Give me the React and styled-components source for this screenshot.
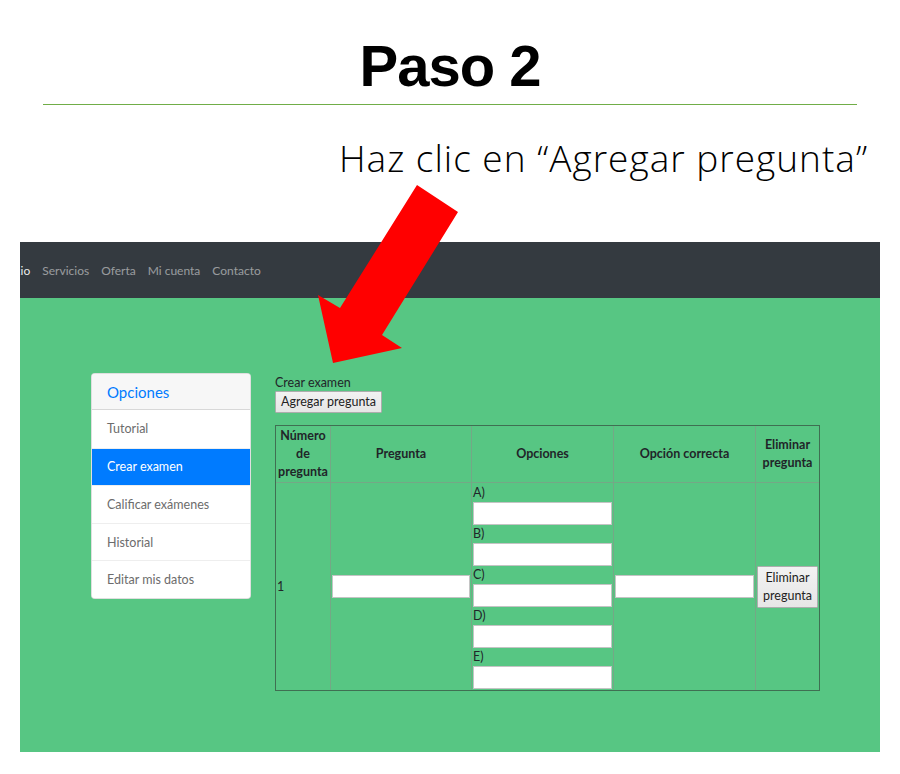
import React from 'react';
import styled, { createGlobalStyle } from 'styled-components';

const GlobalStyle = createGlobalStyle`
    * {
        box-sizing: border-box;
    }
    html, body {
        margin: 0;
        padding: 0;
        background: #ffffff;
    }
`;

const Slide = styled.div`
    position: relative;
    width: 900px;
    height: 774px;
    overflow: hidden;
    background: #ffffff;
    font-family: 'Liberation Sans', Arial, sans-serif;
`;

const Title = styled.h1`
    margin: 0;
    padding-top: 37px;
    font-size: 58px;
    line-height: 58px;
    font-weight: 700;
    letter-spacing: -1px;
    text-align: center;
    color: #000000;
`;

const Rule = styled.div`
    height: 1px;
    margin: 9px 43px 0;
    background: #70ad47;
`;

const Subtitle = styled.p`
    margin: 34px 32px 0 0;
    font-family: 'Open Sans', sans-serif;
    font-weight: 300;
    font-size: 37px;
    line-height: 37px;
    letter-spacing: 1px;
    text-align: right;
    color: #000000;
`;

const Screen = styled.div`
    margin: 66px 0 0 20px;
    width: 860px;
    height: 510px;
    overflow: hidden;
    background: #57c683;
    font-family: 'Lato', 'Noto Sans', sans-serif;
    font-size: 12.5px;
    color: #212529;
`;

const NavBar = styled.nav`
    height: 56px;
    background: #343a40;
    display: flex;
    align-items: center;
    font-size: 12px;
`;

const NavList = styled.div`
    display: flex;
    margin-left: -24px;
`;

const NavLink = styled.span`
    padding: 0 6px;
    color: ${props => (props.active ? 'rgba(255, 255, 255, 0.92)' : 'rgba(255, 255, 255, 0.5)')};
`;

const Body = styled.div`
    display: flex;
    align-items: flex-start;
    gap: 24px;
    padding: 75px 0 0 71px;
`;

const SideCard = styled.div`
    width: 160px;
    background: #ffffff;
    border: 1px solid rgba(0, 0, 0, 0.125);
    border-radius: 4px;
    overflow: hidden;
`;

const SideHeader = styled.div`
    height: 36px;
    display: flex;
    align-items: center;
    padding-left: 15px;
    background: #f7f7f7;
    border-bottom: 1px solid rgba(0, 0, 0, 0.125);
    color: #007bff;
    font-size: 15px;
`;

const SideItem = styled.div`
    height: 37.6px;
    display: flex;
    align-items: center;
    padding-left: 15px;
    background: ${props => (props.active ? '#007bff' : '#ffffff')};
    color: ${props => (props.active ? '#ffffff' : '#6c6c6c')};
    border-top: ${props => (props.first ? 'none' : '1px solid #eeeeee')};
`;

const Content = styled.div`
    width: 545px;
    padding-top: 2px;
`;

const Label = styled.div`
    line-height: 16px;
`;

const Button = styled.button`
    font-family: inherit;
    font-size: 12.5px;
    line-height: ${props => (props.tall ? '18px' : '16px')};
    color: #222222;
    background: linear-gradient(#f2f2f2, #e6e6e6);
    border: 1px solid #adadad;
    border-radius: 1px;
    padding: ${props => (props.tall ? '2px 4px' : '2px 5px')};
    width: ${props => (props.tall ? '61px' : 'auto')};
    cursor: pointer;
`;

const Table = styled.table`
    margin-top: 12px;
    width: 545px;
    border-collapse: separate;
    border-spacing: 0;
    border: 1px solid #3f6f52;
    table-layout: fixed;
`;

const Th = styled.th`
    border-right: 1px solid #74a886;
    border-bottom: 1px solid #74a886;
    padding: 1px;
    font-weight: 700;
    line-height: 18px;
    text-align: center;
    vertical-align: middle;

    &:last-child {
        border-right: none;
    }
`;

const Td = styled.td`
    border-right: 1px solid #74a886;
    padding: 1px;
    vertical-align: middle;
    text-align: ${props => (props.center ? 'center' : 'left')};

    &:last-child {
        border-right: none;
    }
`;

const Input = styled.input`
    display: block;
    width: 100%;
    height: 23px;
    border: 1px solid #c4c4c4;
    background: #ffffff;
    padding: 0 2px;
    margin: 0;
`;

const OptionLabel = styled.div`
    line-height: 18px;
`;

const Arrow = styled.svg`
    position: absolute;
    left: 0;
    top: 0;
    pointer-events: none;
`;

const menu = ['Tutorial', 'Crear examen', 'Calificar exámenes', 'Historial', 'Editar mis datos'];
const links = ['Inicio', 'Servicios', 'Oferta', 'Mi cuenta', 'Contacto'];
const options = ['A)', 'B)', 'C)', 'D)', 'E)'];

function App() {
    return (
        <Slide>
            <GlobalStyle />
            <Title>Paso 2</Title>
            <Rule />
            <Subtitle>Haz clic en “Agregar pregunta”</Subtitle>
            <Screen>
                <NavBar>
                    <NavList>
                        {links.map((link, index) => (
                            <NavLink key={link} active={index === 0}>{link}</NavLink>
                        ))}
                    </NavList>
                </NavBar>
                <Body>
                    <SideCard>
                        <SideHeader>Opciones</SideHeader>
                        {menu.map((item, index) => (
                            <SideItem key={item} first={index === 0} active={index === 1}>
                                {item}
                            </SideItem>
                        ))}
                    </SideCard>
                    <Content>
                        <Label>Crear examen</Label>
                        <Button>Agregar pregunta</Button>
                        <Table>
                            <colgroup>
                                <col style={{ width: '55px' }} />
                                <col style={{ width: '141px' }} />
                                <col style={{ width: '142px' }} />
                                <col style={{ width: '142px' }} />
                                <col style={{ width: '63px' }} />
                            </colgroup>
                            <thead>
                                <tr>
                                    <Th>Número de pregunta</Th>
                                    <Th>Pregunta</Th>
                                    <Th>Opciones</Th>
                                    <Th>Opción correcta</Th>
                                    <Th>Eliminar pregunta</Th>
                                </tr>
                            </thead>
                            <tbody>
                                <tr>
                                    <Td>1</Td>
                                    <Td><Input /></Td>
                                    <Td>
                                        {options.map(option => (
                                            <div key={option}>
                                                <OptionLabel>{option}</OptionLabel>
                                                <Input />
                                            </div>
                                        ))}
                                    </Td>
                                    <Td><Input /></Td>
                                    <Td center><Button tall>Eliminar pregunta</Button></Td>
                                </tr>
                            </tbody>
                        </Table>
                    </Content>
                </Body>
            </Screen>
            <Arrow width="900" height="774" viewBox="0 0 900 774">
                <polygon
                    points="417,185 458,212 382,335 402,348 333,363 318,295 340,308"
                    fill="#ff0000"
                />
            </Arrow>
        </Slide>
    );
}

export default App;
